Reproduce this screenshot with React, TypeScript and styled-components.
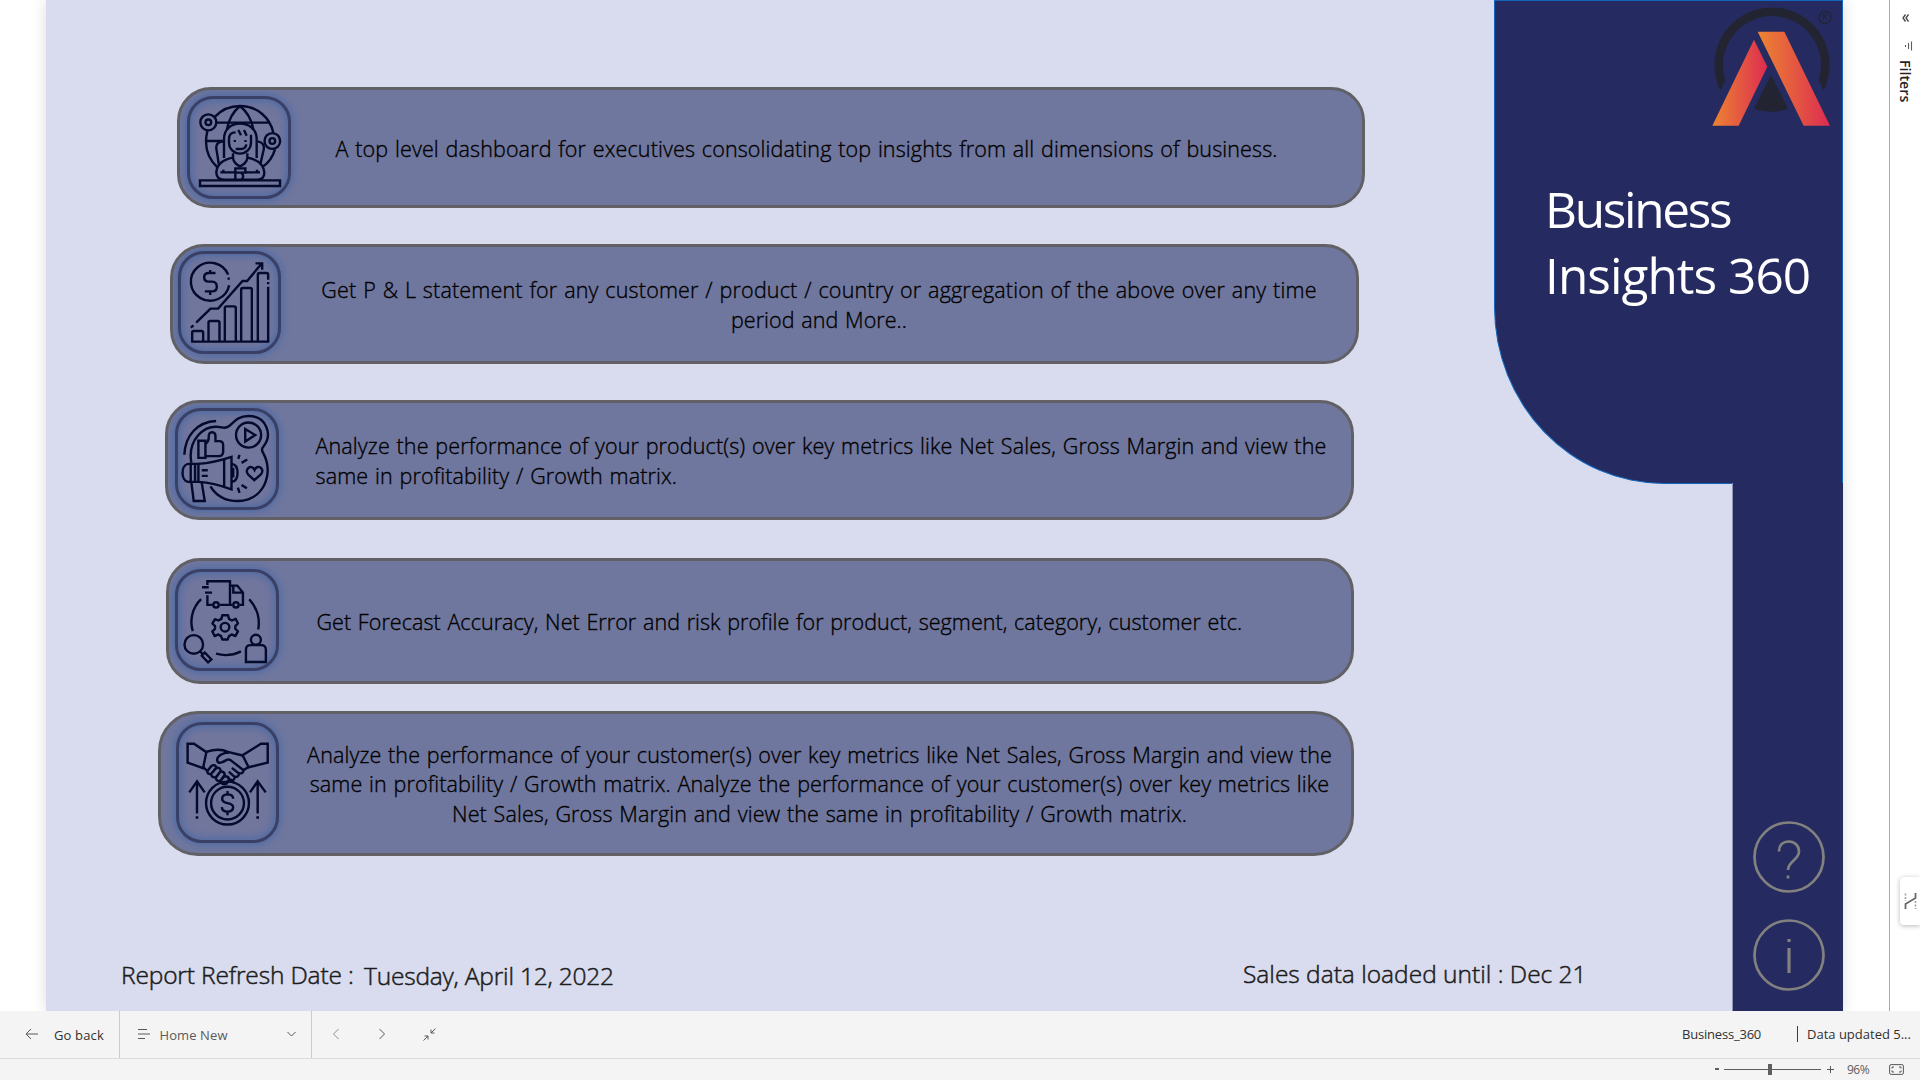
import React from 'react';
import styled, { createGlobalStyle } from 'styled-components';

const GlobalStyle = createGlobalStyle`
  * { box-sizing: border-box; }
  body {
    margin: 0;
    background: #fff;
    overflow: hidden;
    font-family: 'Open Sans', 'Noto Sans', sans-serif;
  }
  svg { display: block; }
`;

const Page = styled.div`
  width: 1920px;
  height: 1080px;
  display: flex;
  flex-direction: column;
`;

const Workspace = styled.div`
  height: 1011px;
  display: flex;
  overflow: hidden;
`;

const Canvas = styled.main`
  width: 1797px;
  margin-left: 46px;
  display: flex;
  background: #d9dcee;
  box-shadow: 0 0 14px rgba(0, 0, 0, 0.14);
`;

const Content = styled.section`
  width: 1448px;
  display: flex;
  flex-direction: column;
  justify-content: space-between;
  padding: 87px 0 18px;
`;

const Card = styled.article<{ $left: number; $width: number; $height: number; $gap: number; $radius: number; $inset: number }>`
  display: flex;
  align-items: center;
  width: ${p => p.$width}px;
  height: ${p => p.$height}px;
  margin-left: ${p => p.$left}px;
  margin-bottom: ${p => p.$gap}px;
  padding-left: ${p => p.$inset}px;
  border: 3px solid #616165;
  border-radius: ${p => p.$radius}px;
  background: #70779e;
  overflow: hidden;
`;

const Tile = styled.div<{ $top: number; $width: number; $height: number }>`
  flex: none;
  align-self: flex-start;
  width: ${p => p.$width}px;
  height: ${p => p.$height}px;
  margin-top: ${p => p.$top}px;
  border: 3px solid #3a3f66;
  border-radius: 26px;
  background: #71769d;
  box-shadow: 0 0 9px 1px #4769a6, inset 0 0 9px 1px #4769a6;

  svg {
    width: ${p => p.$width}px;
    height: ${p => p.$height}px;
    margin: -3px;
    fill: none;
    stroke: #040a2b;
    stroke-width: 7.2;
  }
`;

const Description = styled.div<{ $gap: number; $width: number; $drop?: number; $centered?: boolean; $leading?: number }>`
  flex: none;
  margin-left: ${p => p.$gap}px;
  padding-top: ${p => p.$drop ?? 1}px;
  width: ${p => p.$width}px;
  color: #000;
  font-size: 21.5px;
  font-weight: 300;
  line-height: ${p => p.$leading ?? 30}px;
  word-spacing: 1px;
  text-align: ${p => (p.$centered ? 'center' : 'left')};
  -webkit-text-stroke: 0.35px #000;
`;

const Line = styled.div<{ $track: number }>`
  white-space: nowrap;
  letter-spacing: ${p => p.$track}px;
`;

const Facts = styled.footer`
  display: flex;
  align-items: flex-start;
  height: 36px;
  padding-left: 75px;
`;

const Fact = styled.div<{ $width: number; $top: number; $track: number; $gap?: number }>`
  flex: none;
  width: ${p => p.$width}px;
  margin: ${p => p.$top}px 0 0 ${p => p.$gap ?? 0}px;
  color: #1c1c20;
  font-size: 24.5px;
  font-weight: 300;
  line-height: 34px;
  letter-spacing: ${p => p.$track}px;
  white-space: nowrap;
  -webkit-text-stroke: 0.5px #1c1c20;
`;

const Aside = styled.aside`
  width: 349px;
  display: flex;
  flex-direction: column;
  align-items: flex-end;
`;

const TitlePanel = styled.header`
  width: 349px;
  height: 484px;
  display: flex;
  flex-direction: column;
  padding: 6px 10px 0 50px;
  border: 1px solid #1267bd;
  border-bottom-left-radius: 170px 177px;
  background: #252b60;
`;

const LogoBox = styled.div`
  align-self: flex-end;
  width: 120px;
  height: 119px;
`;

const Title = styled.h1`
  margin: 50px 0 0;
  color: #fff;
  font-size: 49.5px;
  font-weight: 400;
  line-height: 66px;
`;

const Strip = styled.nav`
  width: 111px;
  height: 528px;
  margin-top: -1px;
  display: flex;
  flex-direction: column;
  align-items: center;
  gap: 25.5px;
  padding: 338px 0 0 1px;
  background: #252b60;
  border-left: 1px solid #8f94b9;
`;

const RoundButton = styled.div`
  width: 72px;
  height: 72px;

  svg {
    width: 72px;
    height: 72px;
    fill: none;
    stroke: #82817f;
    stroke-width: 2.7;
  }
`;

const FiltersPane = styled.div`
  width: 31px;
  margin-left: auto;
  display: flex;
  flex-direction: column;
  align-items: flex-end;
  border-left: 1px solid #a8a8a8;
  padding-top: 14px;
`;

const PaneIcon = styled.div<{ $right: number; $bottom: number }>`
  margin: 0 ${p => p.$right}px ${p => p.$bottom}px 0;
`;

const PaneLabel = styled.div`
  writing-mode: vertical-rl;
  margin-right: 5px;
  height: 44px;
  color: #252423;
  font-size: 14.2px;
  font-weight: 600;
  line-height: 20px;
  white-space: nowrap;
`;

const Flyout = styled.div`
  display: flex;
  align-items: center;
  justify-content: center;
  width: 20px;
  height: 48px;
  margin-top: 773px;
  border-radius: 4px 0 0 4px;
  background: #fff;
  box-shadow: 0 1px 5px rgba(0, 0, 0, 0.28);
`;

const Toolbar = styled.div`
  height: 48px;
  display: flex;
  align-items: stretch;
  background: #f4f4f4;
  border-bottom: 1px solid #dcdcdc;
  color: #323130;
  font-size: 13px;
`;

const ToolGroup = styled.div<{ $width: number; $left: number; $divided?: boolean; $muted?: boolean }>`
  display: flex;
  align-items: center;
  width: ${p => p.$width}px;
  padding: 0 0 1px ${p => p.$left}px;
  border-right: ${p => (p.$divided ? '1px solid #cbcbcb' : '0')};
  color: ${p => (p.$muted ? '#5c5a58' : '#323130')};
`;

const ToolText = styled.span<{ $width: number; $gap?: number; $track?: number; $lift?: number }>`
  width: ${p => p.$width}px;
  margin-left: ${p => p.$gap ?? 0}px;
  padding: 1px 0 ${p => p.$lift ?? 0}px;
  line-height: 18px;
  letter-spacing: ${p => p.$track ?? 0}px;
  white-space: nowrap;
`;

const ToolIcon = styled.span<{ $gap?: number }>`
  margin-left: ${p => p.$gap ?? 0}px;

  svg {
    fill: none;
    stroke: #5a5856;
    stroke-width: 1;
  }
`;

const Separator = styled.i`
  width: 1px;
  height: 16px;
  margin: 0 9px 0 36px;
  background: #3c3a50;
`;

const StatusBar = styled.div`
  height: 21px;
  display: flex;
  align-items: center;
  padding: 0 0 1px 1715px;
  background: #f4f4f4;
  color: #605e5c;
  font-size: 12px;
`;

const ZoomStep = styled.i`
  width: 4px;
  height: 2px;
  margin-right: 5px;
  background: #605e5c;
`;

const ZoomTrack = styled.div`
  width: 97px;
  height: 11px;
  display: flex;
  align-items: center;
  background: linear-gradient(#605e5c, #605e5c) center / 100% 1px no-repeat;
`;

const ZoomThumb = styled.i`
  width: 4px;
  height: 11px;
  margin-left: 44px;
  background: #605e5c;
`;

const ZoomValue = styled.span`
  width: 42px;
  margin-left: 13px;
  letter-spacing: -0.5px;
`;

const ExecutiveIcon = () => (
  <svg viewBox="111 78 312 309">
    <circle cx="175" cy="157" r="24" />
    <circle cx="175" cy="157" r="8.5" />
    <circle cx="367" cy="213" r="23.5" />
    <circle cx="367" cy="213" r="8.5" />
    <path d="M195 140C215 119 240 108 270 108C322 108 360 143 370 188" />
    <path d="M172 183C162 226 170 262 202 292M375 238C368 262 358 277 338 290" />
    <path d="M200 158H357M167 213H218" />
    <path d="M270 108C250 124 237 145 231 178M270 108C290 124 304 145 310 178" />
    <path d="M222 264V207C222 177 244 161 270 161S320 177 320 207V264" />
    <path d="M257 187Q237 187 237 207V218A33 33 0 0 0 303 218V194" />
    <path d="M265 180L273 196M282 180L290 197" />
    <path d="M251 213H258M283 213H290" strokeWidth="6" />
    <path d="M257 237H272Q287 237 289 223" />
    <path d="M219 214Q194 216 200 242L207 286M323 214Q345 218 341 239L331 283" />
    <path d="M249 250V263Q201 272 199 308Q200 329 222 329H322Q343 328 343 308Q340 272 292 263V250" />
    <path d="M248 262Q252 282 270 289Q289 282 293 262" />
    <path d="M211 307H255M288 307H330M220 299V307M321 299V307" />
    <path d="M256 329V295H286V308H256M274 310Q284 316 276 328" />
    <path d="M150 331H390V348H150Z" />
  </svg>
);

const FinanceIcon = () => (
  <svg viewBox="86 63 306 309">
    <path d="M235 134A58 57 0 1 0 238 166" />
    <path d="M233 146H240" />
    <path d="M197 129H177Q163 129 163 142T177 155H187Q201 156 201 170T187 184H165M181 120V129M181 184V195" />
    <path d="M139 278L182 236H205L278 153H292L335 101M317 100H337V119" />
    <path d="M123 293L131 286" />
    <path d="M124 335H358" />
    <path d="M127 335V308Q127 303 132 303H155Q160 303 160 308V335" />
    <path d="M176 335V278Q176 273 181 273H204Q209 273 209 278V335" />
    <path d="M225 335V234Q225 229 230 229H253Q258 229 258 234V335" />
    <path d="M274 335V179Q274 174 279 174H301Q306 174 306 179V335" />
    <path d="M324 335V134Q324 129 329 129H350Q355 129 355 134V149M355 156V163M355 170V335" />
  </svg>
);

const MarketingIcon = () => (
  <svg viewBox="75 55 311 305">
    <path d="M103 195C105 138 142 96 198 94" />
    <path d="M124 219C112 155 158 101 215 113C245 121 246 79 295 79C347 79 369 133 339 171Q331 180 340 192C372 252 339 333 262 333C228 333 198 317 181 289" />
    <circle cx="295" cy="136" r="37.5" />
    <path d="M285 118L315 136L285 155Z" />
    <path d="M145 153H166V204H145Z" />
    <path d="M166 163Q177 155 176 138Q176 128 186 127Q196 128 196 139V154H207Q219 154 219 166V187Q218 199 206 199H166" />
    <path d="M122 222H114C92 226 92 272 114 276H122" />
    <path d="M122 222H145V276H122ZM135 222V276" />
    <path d="M145 222Q190 219 244 201V298Q190 279 145 276M222 209V290" />
    <path d="M245 222Q262 224 262 249T245 275M249 234V263" />
    <path d="M155 241H173M155 258H173M124 278L131 333H164L155 279" />
    <path d="M264 207L268 195M274 219L291 209M263 293L268 309M274 285L290 295" />
    <path d="M312 271L294 254C280 240 303 220 313 240C322 220 347 238 331 254Z" />
  </svg>
);

const SupplyIcon = () => (
  <svg viewBox="75 71 312 307">
    <path d="M172 119V108H240V179H209M188 179H172V150" />
    <path d="M156 126H176M165 142H186" />
    <path d="M240 121H262L279 142V179H269M247 179H240M250 121V142H279" />
    <circle cx="198" cy="179" r="8" />
    <circle cx="258" cy="179" r="8" />
    <path d="M153 162C126 188 118 226 128 258M298 162C323 190 331 219 325 253M198 326Q237 337 273 319" />
    <path d="M217 210H234L237 221L246 226L257 221L264 235L256 243V251L264 259L256 273L245 268L237 273L233 283H217L213 273L205 268L194 273L187 259L195 251V243L187 235L195 222L205 226L214 221Z" strokeLinejoin="round" />
    <circle cx="225" cy="246" r="13" />
    <circle cx="131" cy="298" r="28" />
    <path d="M149 318L161 330M155 332L164 322L184 343L174 352Z" />
    <circle cx="318" cy="284" r="15" />
    <path d="M288 351V314Q288 300 302 300H334Q348 300 348 314V351Z" />
  </svg>
);

const CustomerIcon = () => (
  <svg viewBox="110 67 306 361">
    <path d="M144 132H163L200 157L190 205L144 188ZM383 132H363L308 166L326 202L383 188Z" />
    <path d="M200 156Q238 144 264 156L308 167" />
    <path d="M268 158C248 158 232 169 232 181C234 194 248 188 261 180Q269 177 276 184L311 211" />
    <path d="M190 201L204 214M326 201L308 212" />
    <path d="M203 213L215 198Q224 192 230 202L214 222Q202 224 203 213ZM214 222L230 204Q241 201 243 213L228 232Q215 234 214 222ZM228 233L242 215Q253 214 255 224L242 242Q229 245 228 233ZM242 243L254 229Q266 228 268 239L260 251Q246 257 242 243Z" />
    <path d="M311 211Q309 224 295 219L276 204M298 221Q295 235 282 229L267 215M285 230Q284 244 271 239L263 232M275 240L283 249" />
    <circle cx="263" cy="309" r="64" />
    <circle cx="263" cy="309" r="49" />
    <path d="M280 296Q279 283 263 283Q247 284 247 296Q247 306 263 309Q280 312 280 322Q279 334 263 335Q247 334 246 321M263 273V283M263 335V345" />
    <path d="M172 340V245M149 277L172 244L195 277M353 340V245M330 277L353 244L377 277" />
    <path d="M168 352H176M349 352H357" strokeWidth="8" />
  </svg>
);

const Logo = () => (
  <svg width="120" height="119" viewBox="155 21 360 357">
    <defs>
      <linearGradient id="leg" x1="0" x2="1">
        <stop offset="0.05" stopColor="#ec8033" />
        <stop offset="1" stopColor="#dc2c50" />
      </linearGradient>
    </defs>
    <path d="M180 272A173 173 0 1 1 490 272L475 240A147 147 0 1 0 195 240Z" fill="#222431" />
    <path d="M332 225L383 326Q332 345 281 326Z" fill="#222431" />
    <path d="M281 119L321 200L235 377H156Z" fill="url(#leg)" />
    <path d="M292 95H372L509 377H430Z" fill="url(#leg)" />
    <circle cx="494" cy="52" r="18" fill="none" stroke="#222431" strokeWidth="3.5" />
    <text x="494" y="61" fill="#222431" fontSize="25" fontWeight="600" textAnchor="middle">R</text>
  </svg>
);

export default function App() {
  return (
    <Page>
      <GlobalStyle />
      <Workspace>
        <Canvas>
          <Content>
            <div>
              <Card $left={131} $width={1188} $height={121} $gap={36} $radius={34} $inset={7}>
                <Tile $top={6} $width={104} $height={103}><ExecutiveIcon /></Tile>
                <Description $gap={44.5} $width={945} $drop={3}>
                  <Line $track={0.13}>A top level dashboard for executives consolidating top insights from all dimensions of business.</Line>
                </Description>
              </Card>
              <Card $left={124} $width={1189} $height={120} $gap={36} $radius={34} $inset={5.4}>
                <Tile $top={4} $width={103} $height={103}><FinanceIcon /></Tile>
                <Description $gap={39.6} $width={996} $centered>
                  <Line $track={0.17}>Get P &amp; L statement for any customer / product / country or aggregation of the above over any time</Line>
                  <Line $track={0.07}>period and More..</Line>
                </Description>
              </Card>
              <Card $left={119} $width={1189} $height={120} $gap={38} $radius={34} $inset={7}>
                <Tile $top={5} $width={104} $height={102}><MarketingIcon /></Tile>
                <Description $gap={36.5} $width={1012}>
                  <Line $track={0.125}>Analyze the performance of your product(s) over key metrics like Net Sales, Gross Margin and view the</Line>
                  <Line $track={0.13}>same in profitability / Growth matrix.</Line>
                </Description>
              </Card>
              <Card $left={120} $width={1188} $height={126} $gap={27} $radius={34} $inset={6}>
                <Tile $top={8} $width={104} $height={102}><SupplyIcon /></Tile>
                <Description $gap={37.5} $width={930}>
                  <Line $track={0.06}>Get Forecast Accuracy, Net Error and risk profile for product, segment, category, customer etc.</Line>
                </Description>
              </Card>
              <Card $left={112} $width={1196} $height={145} $gap={0} $radius={40} $inset={15.4}>
                <Tile $top={8} $width={103} $height={121}><CustomerIcon /></Tile>
                <Description $gap={26.1} $width={1028} $leading={29.4} $centered>
                  <Line $track={0.11}>Analyze the performance of your customer(s) over key metrics like Net Sales, Gross Margin and view the</Line>
                  <Line $track={0.115}>same in profitability / Growth matrix. Analyze the performance of your customer(s) over key metrics like</Line>
                  <Line $track={0.12}>Net Sales, Gross Margin and view the same in profitability / Growth matrix.</Line>
                </Description>
              </Card>
            </div>
            <Facts>
              <Fact $width={243} $top={1} $track={-0.15}>Report Refresh Date :</Fact>
              <Fact $width={260} $top={2} $track={-0.2}>Tuesday, April 12, 2022</Fact>
              <Fact $width={345} $top={0} $gap={619} $track={0}>Sales data loaded until : Dec 21</Fact>
            </Facts>
          </Content>
          <Aside>
            <TitlePanel>
              <LogoBox><Logo /></LogoBox>
              <Title>
                <Line $track={-2.3}>Business</Line>
                <Line $track={-0.95}>Insights 360</Line>
              </Title>
            </TitlePanel>
            <Strip>
              <RoundButton>
                <svg viewBox="0 0 72 72">
                  <circle cx="36" cy="36" r="34.5" />
                  <path d="M26 30.5C26 24 30 20.5 36 20.5S46 25 46 30.5C46 39 35 40 35 49M35 54.5V57.5" />
                </svg>
              </RoundButton>
              <RoundButton>
                <svg viewBox="0 0 72 72">
                  <circle cx="36" cy="36" r="34.5" />
                  <path d="M36 20V23M36 29V54" strokeWidth="3.2" />
                </svg>
              </RoundButton>
            </Strip>
          </Aside>
        </Canvas>
        <FiltersPane>
          <PaneIcon $right={11} $bottom={19}>
            <svg width="7" height="8" viewBox="0 0 7 8" fill="none" stroke="#484644" strokeWidth="1.3"><path d="M3.5 0.5L1 4L3.5 7.500M6.500 0.500L4 4L6.500 7.500" /></svg>
          </PaneIcon>
          <PaneIcon $right={7} $bottom={9}>
            <svg width="9" height="10" viewBox="0 0 9 10" fill="none" stroke="#605e5c" strokeWidth="1.1"><path d="M7.5 0.5V9.5M4.5 2V8M1.5 4V6" /></svg>
          </PaneIcon>
          <PaneLabel>Filters</PaneLabel>
          <Flyout>
            <svg width="13" height="18" viewBox="0 0 13 18" fill="none" stroke="#6c6a68" strokeWidth="1.8">
              <path d="M1.5 17V12L11.500 6V1" />
              <path d="M1.500 1.500V9M11.500 9V17" strokeWidth="1.600" strokeDasharray="2 1.500" stroke="#a09e9c" />
            </svg>
          </Flyout>
        </FiltersPane>
      </Workspace>
      <Toolbar>
        <ToolGroup $width={120} $left={25} $divided>
          <ToolIcon><svg width="13" height="12" viewBox="0 0 13 12"><path d="M6 1L1 6L6 11M1 6H13" /></svg></ToolIcon>
          <ToolText $gap={16} $width={52} $track={0.15}>Go back</ToolText>
        </ToolGroup>
        <ToolGroup $width={192} $left={17} $divided $muted>
          <ToolIcon><svg width="13" height="12" viewBox="0 0 13 12"><path d="M1 1.5H10M1 6H13M1 10.500H8" /></svg></ToolIcon>
          <ToolText $gap={9.5} $width={127.5} $track={0.1}>Home New</ToolText>
          <ToolIcon><svg width="9" height="6" viewBox="0 0 9 6"><path d="M0.500 1L4.500 5L8.500 1" /></svg></ToolIcon>
        </ToolGroup>
        <ToolGroup $width={1370} $left={20}>
          <ToolIcon><svg width="8" height="12" viewBox="0 0 8 12" opacity="0.65"><path d="M6.500 1L1.500 6L6.500 11" /></svg></ToolIcon>
          <ToolIcon $gap={38}><svg width="8" height="12" viewBox="0 0 8 12"><path d="M1.500 1L6.500 6L1.500 11" /></svg></ToolIcon>
          <ToolIcon $gap={37}><svg width="13" height="13" viewBox="0 0 13 13"><path d="M12.500 0.500L8 5M8 1.500V5H11.500M0.500 12.500L5 8M1.500 8H5V11.500" /></svg></ToolIcon>
        </ToolGroup>
        <ToolGroup $width={238} $left={0}>
          <ToolText $width={79} $track={-0.2} $lift={2}>Business_360</ToolText>
          <Separator />
          <ToolText $width={106} $lift={2}>Data updated 5...</ToolText>
        </ToolGroup>
      </Toolbar>
      <StatusBar>
        <ZoomStep />
        <ZoomTrack><ZoomThumb /></ZoomTrack>
        <ToolIcon $gap={6}><svg width="7" height="7" viewBox="0 0 7 7"><path d="M0 3.500H7M3.500 0V7" /></svg></ToolIcon>
        <ZoomValue>96%</ZoomValue>
        <ToolIcon>
          <svg width="15" height="11" viewBox="0 0 15 11">
            <rect x="0.600" y="0.600" width="13.800" height="9.800" rx="1.500" />
            <path d="M3 4.500V3H5M10 3H12V4.500M3 6.500V8H5M10 8H12V6.500" />
          </svg>
        </ToolIcon>
      </StatusBar>
    </Page>
  );
}
